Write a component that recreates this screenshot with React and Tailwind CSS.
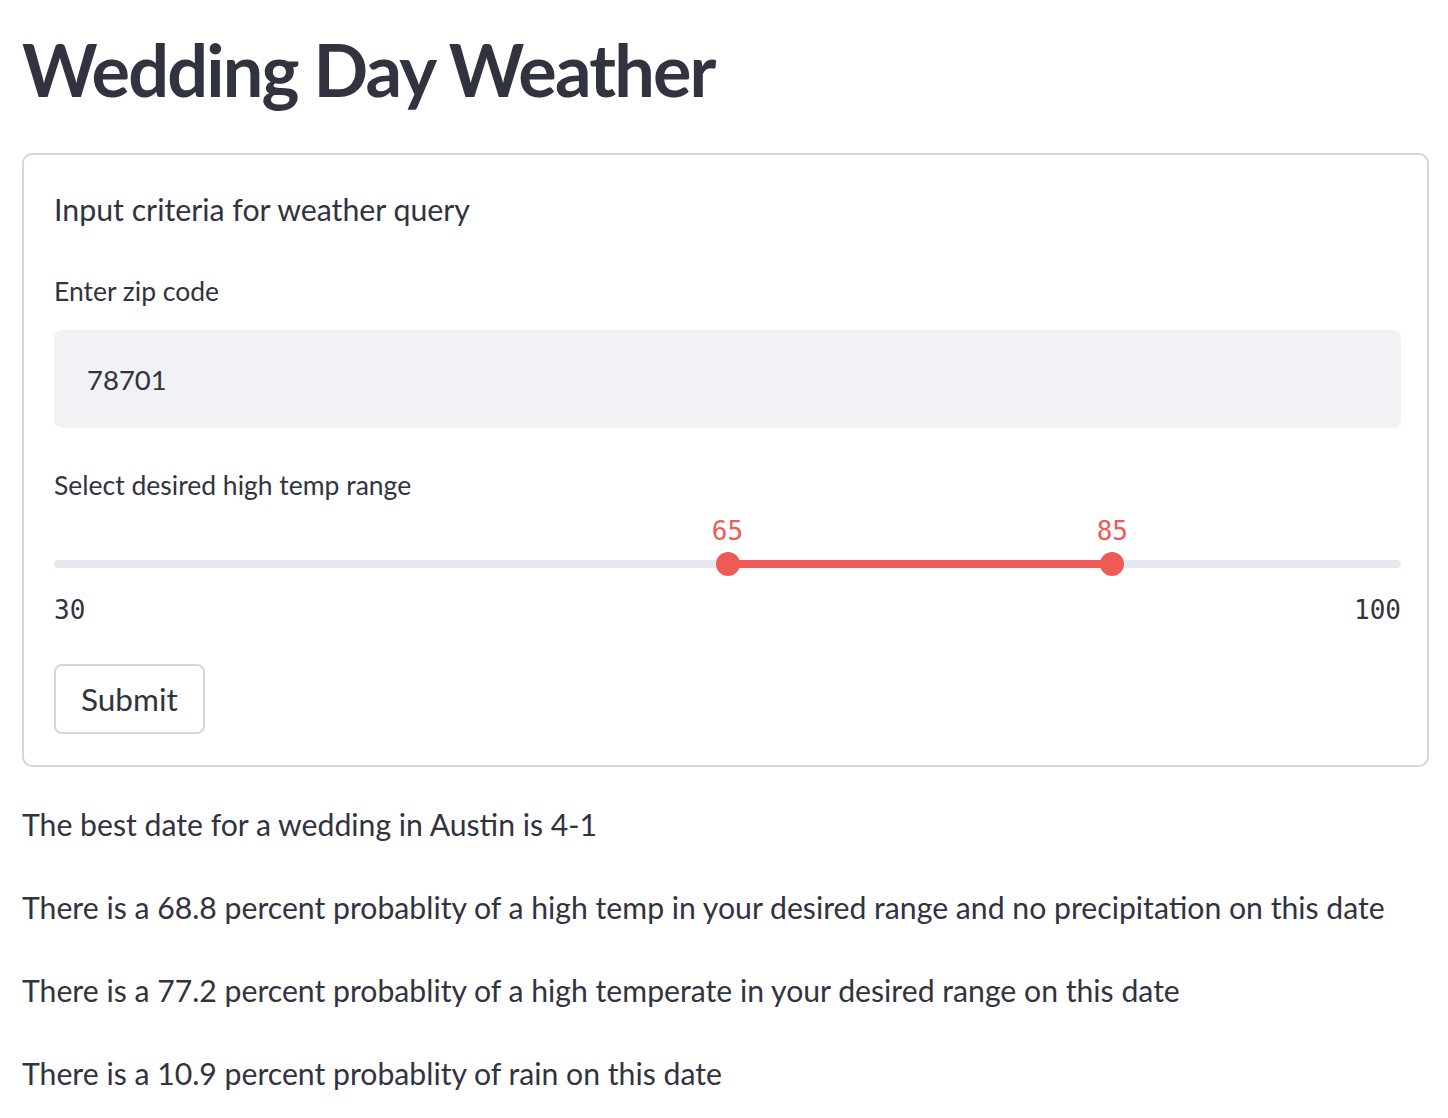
const sans = { fontFamily: '"Lato", "Noto Sans", sans-serif' };
const mono = { fontFamily: '"DejaVu Sans Mono", "Liberation Mono", monospace' };

const results = [
  'The best date for a wedding in Austin is 4-1',
  'There is a 68.8 percent probablity of a high temp in your desired range and no precipitation on this date',
  'There is a 77.2 percent probablity of a high temperate in your desired range on this date',
  'There is a 10.9 percent probablity of rain on this date',
];

function Thumb({ value, side }) {
  return (
    <div className={side === 'left' ? 'absolute left-0 top-0' : 'absolute right-0 top-0'}>
      <span
        className={
          'absolute bottom-[16px] text-[26px] leading-[26px] text-[#ee5a55] ' +
          (side === 'left' ? '-translate-x-1/2' : 'translate-x-1/2 right-0')
        }
        style={mono}
      >
        {value}
      </span>
      <span
        className={
          'absolute top-[-8px] w-[24px] h-[24px] rounded-full bg-[#ee5a55] ' +
          (side === 'left' ? 'left-[-12px]' : 'right-[-12px]')
        }
      />
    </div>
  );
}

function RangeSlider({ min, max, low, high }) {
  const pct = (v) => ((v - min) / (max - min)) * 100;
  return (
    <div>
      <div className="flex h-[8px] rounded-full bg-[#e6e8ef]">
        <div style={{ width: pct(low) + '%' }} />
        <div className="relative h-full bg-[#ee5a55]" style={{ width: pct(high) - pct(low) + '%' }}>
          <Thumb value={low} side="left" />
          <Thumb value={high} side="right" />
        </div>
      </div>
      <div className="flex justify-between mt-[29px] text-[26px] leading-[26px]" style={mono}>
        <span>{min}</span>
        <span>{max}</span>
      </div>
    </div>
  );
}

export default function App() {
  return (
    <div className="min-h-screen bg-white text-[#31333f] pl-[22px] pr-[19px] pt-[26px]" style={sans}>
      <h1 className="text-[72px] font-bold leading-[1.2] tracking-[-1.8px]">Wedding Day Weather</h1>

      <form
        className="mt-[41px] border-2 border-[#d6d6d8] rounded-[10px] pl-[30px] pr-[26px] pt-[36px] pb-[31px]"
        onSubmit={(e) => e.preventDefault()}
      >
        <p className="text-[30.3px] leading-[36px]">Input criteria for weather query</p>

        <label className="block mt-[47px] text-[26.5px] leading-[34px]">Enter zip code</label>
        <div className="mt-[22px] h-[98px] rounded-[8px] bg-[#f0f2f6] flex items-center px-[33px] text-[27.5px]">
          78701
        </div>

        <label className="block mt-[40px] text-[26.5px] leading-[34px]">Select desired high temp range</label>
        <div className="mt-[58px]">
          <RangeSlider min={30} max={100} low={65} high={85} />
        </div>

        <button
          type="submit"
          className="mt-[41px] h-[70px] px-[25px] border-2 border-[#d6d6d8] rounded-[8px] bg-white text-[31.5px] leading-none"
        >
          Submit
        </button>
      </form>

      <div className="mt-[38px] flex flex-col gap-[45px] text-[30.2px] leading-[38px]">
        {results.map((r) => (
          <p key={r}>{r}</p>
        ))}
      </div>
    </div>
  );
}
